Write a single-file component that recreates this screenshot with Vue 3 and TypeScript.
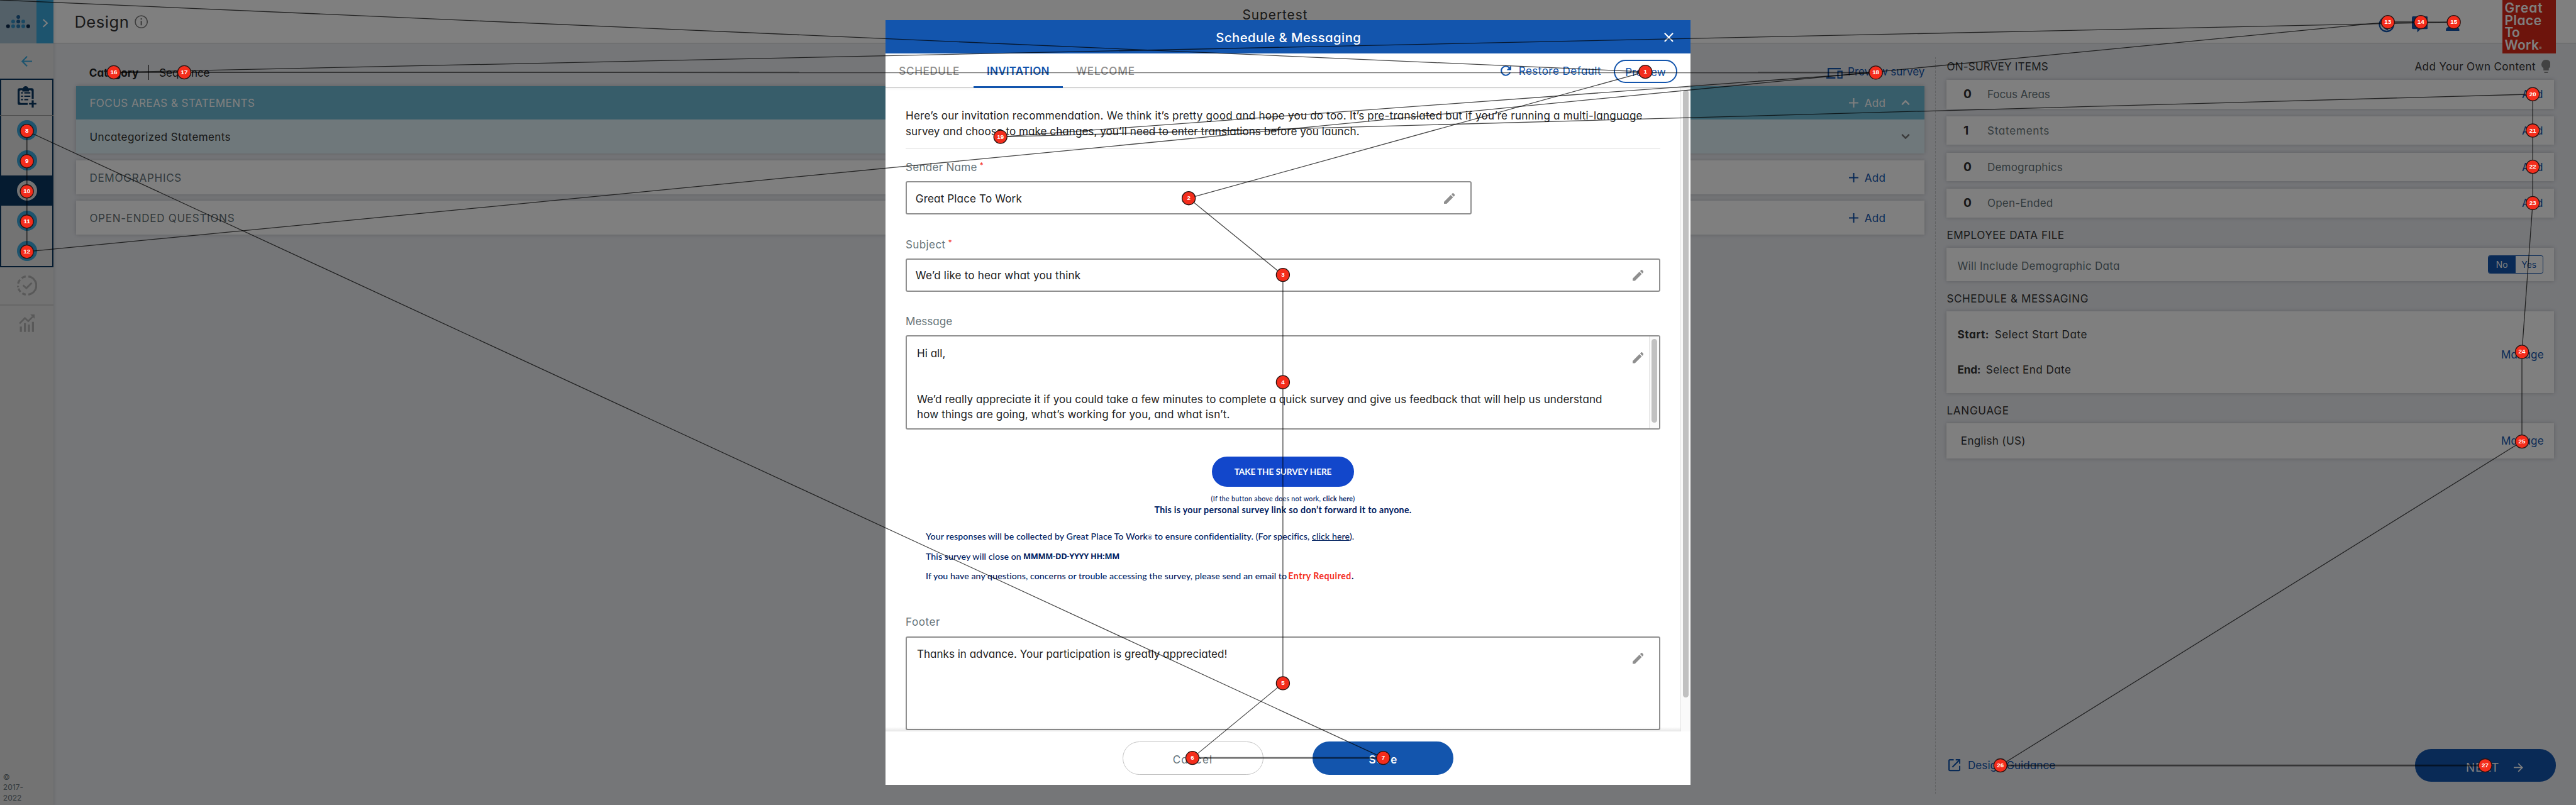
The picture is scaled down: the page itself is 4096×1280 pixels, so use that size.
<script setup lang="ts">
interface Stop { n: number; x: number; y: number }
interface Segment { x1: number; y1: number; x2: number; y2: number; w: number; o: number }

// Spreads the letters of a label over a given measure (in tenths of a rem).
const vFit = {
  mounted(el: HTMLElement, binding: { value: number }) {
    const unit = parseFloat(getComputedStyle(document.documentElement).fontSize) / 10
    const count = (el.textContent ?? '').trim().length
    const natural = el.getBoundingClientRect().width
    el.style.letterSpacing = `${((binding.value + 1.5) * unit - natural) / count}px`
  },
}

const sections = [
  { label: 'DEMOGRAPHICS', w: 136 },
  { label: 'OPEN-ENDED QUESTIONS', w: 215 },
]

const items = [
  { count: 0, label: 'Focus Areas', w: 92 },
  { count: 1, label: 'Statements', w: 91.5 },
  { count: 0, label: 'Demographics', w: 111 },
  { count: 0, label: 'Open-Ended', w: 96.5 },
]

const logoDots: [number, number, string][] = [
  [27.3, 25.4, '#1f5f95'],
  [19.6, 32.1, '#3590c4'], [27.3, 32.1, '#1f5f95'], [34.7, 32.1, '#3590c4'],
  [12, 39.2, '#0b2b4f'], [19.6, 39.2, '#3590c4'], [27.3, 39.2, '#2a78ae'], [34.7, 39.2, '#3590c4'], [42.1, 39.2, '#0b2b4f'],
]

const steps = [8, 9, 10, 11, 12]

const stops: Stop[] = [
  { n: 1, x: 2452.7, y: 107 }, { n: 2, x: 1772, y: 295.5 }, { n: 3, x: 1912.4, y: 409.8 },
  { n: 4, x: 1912.4, y: 569.7 }, { n: 5, x: 1912.4, y: 1018.5 }, { n: 6, x: 1777.5, y: 1129.8 },
  { n: 7, x: 2062, y: 1129.8 }, { n: 8, x: 40, y: 195.2 }, { n: 9, x: 40, y: 240.3 },
  { n: 10, x: 40, y: 285.3 }, { n: 11, x: 40, y: 330.3 }, { n: 12, x: 40, y: 375.2 },
  { n: 13, x: 3559.5, y: 33 }, { n: 14, x: 3608.7, y: 33 }, { n: 15, x: 3657.8, y: 33 },
  { n: 16, x: 169.6, y: 107.8 }, { n: 17, x: 274.7, y: 107.8 }, { n: 18, x: 2796.2, y: 108.2 },
  { n: 19, x: 1491.3, y: 204 }, { n: 20, x: 3775.5, y: 140.4 }, { n: 21, x: 3775.5, y: 194.6 },
  { n: 22, x: 3775.5, y: 248.7 }, { n: 23, x: 3775.5, y: 302.7 }, { n: 24, x: 3759.4, y: 524.5 },
  { n: 25, x: 3759.4, y: 658.2 }, { n: 26, x: 2982, y: 1141 }, { n: 27, x: 3704.6, y: 1141 },
]

const segments: Segment[] = stops.map((s, i) => {
  const from = i === 0 ? { x: 0, y: 0 } : stops[i - 1]
  const broad = [7, 14, 27].includes(s.n)
  const middle = [9, 10, 11, 12, 17, 18].includes(s.n)
  return { x1: from.x, y1: from.y, x2: s.x, y2: s.y, w: broad ? 2.6 : middle ? 1.9 : 1.2, o: broad || middle ? 0.55 : 0.72 }
})
</script>

<template>
  <div class="app">
    <aside class="side">
      <div class="brand">
        <svg class="dots" viewBox="0 0 54 65"><circle v-for="(d, i) in logoDots" :key="i" :cx="d[0]" :cy="d[1]" r="2.8" :fill="d[2]" /></svg>
        <div class="expand"><svg viewBox="0 0 26 65"><path d="M10 29l6 5.5-6 5.5" fill="none" stroke="#fff" stroke-width="1.9" /></svg></div>
      </div>
      <div class="back"><svg viewBox="0 0 16 16"><path d="M16 8H1.5M8.5 .8L1.3 8l7.2 7.2" fill="none" stroke="#3aa8dc" stroke-width="2" /></svg></div>
      <div class="steps">
        <div class="stephead">
          <svg viewBox="0 0 28 32"><path fill="#0b3760" fill-rule="evenodd" d="M3 3h5c1-4 7-4 8 0h5q3 0 3 3v13h-3V8q0-2-2-2h-2v2H7V6H5Q3 6 3 8v15q0 2 2 2h10v3H3q-3 0-3-3V6q0-3 3-3z" /><path fill="#0b3760" d="M5 9h3v2H5zm5 0h9v2h-9zM5 14h3v2H5zm5 0h9v2h-9zM5 19h3v2H5zm5 0h6v2h-6zM21 21h3v4h4v2.500h-4v4.500h-3v-4.500h-4V25h4z" /></svg>
        </div>
        <div v-for="s in steps" :key="s" class="step" :class="{ current: s === 10 }"><span class="ring"></span></div>
      </div>
      <div class="later first">
        <svg viewBox="0 0 30 30"><g fill="none" stroke="#b2b2b2" stroke-width="3"><path d="M17 1.600a13.500 13.500 0 0 1 0 26.800" /><path d="M13 1.600A13.500 13.500 0 0 0 1.600 17.500" stroke-dasharray="6.500 3.300" /><path d="M1.900 18.500A13.500 13.500 0 0 0 13 28.400" stroke-dasharray="6 3.300" stroke-dashoffset="-1" /><path d="M9 14.500l5 4.500 8-8" stroke-width="2.600" /></g></svg>
      </div>
      <div class="later second">
        <svg viewBox="0 0 24 26"><path d="M1 13.500l8-8 5 4.500 6.500-6.500" fill="none" stroke="#b2b2b2" stroke-width="2.400" /><path d="M17 0h7v7zM1.500 18h3v8h-3zm6-5h3v13h-3zm6 2h3v11h-3zm6-4h3v15h-3z" fill="#b2b2b2" /></svg>
      </div>
      <div class="copy">©<br />2017-<br />2022</div>
    </aside>

    <div class="main">
      <header class="top">
        <div class="title">
          <span v-fit="80">Design</span>
          <svg viewBox="0 0 20 20"><circle cx="10" cy="10" r="9" fill="none" stroke="#7c7c7c" stroke-width="1.500" /><path d="M9 4.800h2v2H9zM9 8.600h2v6.600H9z" fill="#7c7c7c" /></svg>
        </div>
        <div class="project"><span v-fit="96">Supertest</span></div>
        <div class="tools">
          <svg viewBox="0 0 24 24"><circle cx="12" cy="12" r="10.500" fill="none" stroke="#1355ad" stroke-width="2.200" /><path d="M9 17l5 3" stroke="#1355ad" stroke-width="2.500" /></svg>
          <svg viewBox="0 0 24 24"><path d="M2 0h20q2 0 2 2v15q0 2-2 2H13l-5 5V19H2q-2 0-2-2V2Q0 0 2 0z" fill="#1355ad" /></svg>
          <svg viewBox="0 0 24 24"><circle cx="12" cy="8" r="5.500" fill="#1355ad" /><path d="M2 21.500v-2c0-3 5-5 10-5s10 2 10 5v2z" fill="#1355ad" /></svg>
        </div>
        <div class="gptw">
          <span v-fit="56">Great</span><span v-fit="54">Place</span><span v-fit="21">To</span><span class="wk"><span v-fit="50">Work</span><i>®</i></span>
        </div>
      </header>

      <div class="content">
        <section class="left">
          <div class="bar">
            <b class="cat"><span v-fit="72">Category</span></b>
            <span class="seq"><span v-fit="73.5">Sequence</span></span>
            <a class="survey">
              <svg viewBox="0 0 24 16"><path d="M3 13.500V1h18.500M0 15h13.500" fill="none" stroke="#1355ad" stroke-width="2.200" /><rect x="17.300" y="5" width="6" height="10" fill="none" stroke="#1355ad" stroke-width="1.800" /></svg>
              <span v-fit="113">Preview survey</span>
            </a>
          </div>
          <div class="card open">
            <div class="row teal">
              <span v-fit="245">FOCUS AREAS &amp; STATEMENTS</span>
              <a class="add"><svg viewBox="0 0 14 14"><path d="M7 0v14M0 7h14" stroke="currentColor" stroke-width="2" /></svg><span v-fit="30">Add</span></a>
              <svg class="chev" viewBox="0 0 12 7"><path d="M1 6.300l5-5 5 5" fill="none" stroke="#fff" stroke-width="2.200" /></svg>
            </div>
            <div class="row pale">
              <span v-fit="209">Uncategorized Statements</span>
              <svg class="chev" viewBox="0 0 12 7"><path d="M1 .7l5 5 5-5" fill="none" stroke="#777" stroke-width="2.200" /></svg>
            </div>
          </div>
          <div v-for="s in sections" :key="s.label" class="card row plain">
            <span v-fit="s.w">{{ s.label }}</span>
            <a class="add"><svg viewBox="0 0 14 14"><path d="M7 0v14M0 7h14" stroke="currentColor" stroke-width="2" /></svg><span v-fit="30">Add</span></a>
          </div>
        </section>

        <div class="dash"></div>

        <section class="right">
          <div class="head firsthead">
            <span v-fit="150">ON-SURVEY ITEMS</span>
            <div class="own"><span v-fit="179">Add Your Own Content</span><svg viewBox="0 0 14 20"><path d="M7 0a7 7 0 0 1 4 12.700V16H3v-3.300A7 7 0 0 1 7 0zM4 18h6q0 2-1.500 2h-3Q4 20 4 18z" fill="#858585" /></svg></div>
          </div>
          <div v-for="it in items" :key="it.label" class="card item">
            <b>{{ it.count }}</b><span v-fit="it.w">{{ it.label }}</span><a><span v-fit="30">Add</span></a>
          </div>
          <div class="head"><span v-fit="174">EMPLOYEE DATA FILE</span></div>
          <div class="card demo">
            <span class="grey"><span v-fit="240.6">Will Include Demographic Data</span></span>
            <div class="toggle"><span class="on">No</span><span>Yes</span></div>
          </div>
          <div class="head"><span v-fit="210">SCHEDULE &amp; MESSAGING</span></div>
          <div class="card sched">
            <div class="dates">
              <div><b v-fit="46">Start:</b><span v-fit="136.6">Select Start Date</span></div>
              <div><b v-fit="33">End:</b><span v-fit="125.5">Select End Date</span></div>
            </div>
            <a><span v-fit="62">Manage</span></a>
          </div>
          <div class="head"><span v-fit="91.7">LANGUAGE</span></div>
          <div class="card lang"><span v-fit="95">English (US)</span><a><span v-fit="62">Manage</span></a></div>
          <div class="bottom">
            <a class="guide"><svg viewBox="0 0 18 18"><path d="M8 1H2.500Q1 1 1 2.500v13Q1 17 2.500 17h13q1.500 0 1.500-1.500V10M11 1h6v6M17 1L6 12" fill="none" stroke="#1355ad" stroke-width="2" /></svg><span v-fit="129">Design Guidance</span></a>
            <button class="next"><span v-fit="48.6">NEXT</span><svg viewBox="0 0 14 14"><path d="M0 7h12.500M6.800 1l6 6-6 6" fill="none" stroke="#fff" stroke-width="1.600" /></svg></button>
          </div>
        </section>
      </div>
    </div>

    <div class="shade">
      <div class="modal">
        <div class="mhead">
          <span v-fit="215">Schedule &amp; Messaging</span>
          <svg viewBox="0 0 14 14"><path d="M.8 .8l12.400 12.400M13.200 .8L.8 13.200" stroke="#fff" stroke-width="2" /></svg>
        </div>
        <nav class="tabs">
          <span class="tab t1"><span v-fit="89">SCHEDULE</span></span>
          <span class="tab active"><span v-fit="92">INVITATION</span></span>
          <span class="tab t3"><span v-fit="86.5">WELCOME</span></span>
          <a class="restore"><svg viewBox="0 0 16 16"><path d="M14.200 10.500A6.800 6.800 0 1 1 12.800 3.200" fill="none" stroke="#1355ad" stroke-width="2" /><path d="M16 0v7H9z" fill="#1355ad" /></svg><span v-fit="121.6">Restore Default</span></a>
          <button class="preview"><span v-fit="59">Preview</span></button>
        </nav>
        <div class="mbody">
          <div class="form">
            <p class="intro">
              <span v-fit="1097">Here’s our invitation recommendation. We think it’s pretty good and hope you do too. It’s pre-translated but if you’re running a multi-language</span><br />
              <span v-fit="675">survey and choose to make changes, you’ll need to enter translations before you launch.</span>
            </p>
            <label><span v-fit="105">Sender Name</span><i>*</i></label>
            <div class="field short"><span v-fit="157">Great Place To Work</span><svg class="pen" viewBox="3 3 18 18"><path d="M3 17.250V21h3.750L17.810 9.940l-3.750-3.750zM20.710 7.040a1 1 0 0 0 0-1.410l-2.340-2.340a1 1 0 0 0-1.410 0l-1.830 1.830 3.750 3.750z" /></svg></div>
            <label class="gap"><span v-fit="58">Subject</span><i>*</i></label>
            <div class="field"><span v-fit="244.5">We’d like to hear what you think</span><svg class="pen" viewBox="3 3 18 18"><path d="M3 17.250V21h3.750L17.810 9.940l-3.750-3.750zM20.710 7.040a1 1 0 0 0 0-1.410l-2.340-2.340a1 1 0 0 0-1.410 0l-1.830 1.830 3.750 3.750z" /></svg></div>
            <label class="gap"><span v-fit="68">Message</span></label>
            <div class="area">
              <div class="text"><span v-fit="41">Hi all,</span><br /><br /><br /><span v-fit="1020">We’d really appreciate it if you could take a few minutes to complete a quick survey and give us feedback that will help us understand</span><br /><span v-fit="465">how things are going, what’s working for you, and what isn’t.</span></div>
              <svg class="pen" viewBox="3 3 18 18"><path d="M3 17.250V21h3.750L17.810 9.940l-3.750-3.750zM20.710 7.040a1 1 0 0 0 0-1.410l-2.340-2.340a1 1 0 0 0-1.410 0l-1.830 1.830 3.750 3.750z" /></svg>
              <div class="track"><div class="thumb"></div></div>
            </div>
            <div class="mail">
              <div class="take"><span v-fit="143.5">TAKE THE SURVEY HERE</span></div>
              <div class="hint"><span v-fit="212.6">(If the button above does not work, <b>click here</b>)</span></div>
              <div class="own-link"><span v-fit="382">This is your personal survey link so don’t forward it to anyone.</span></div>
              <p><span v-fit="637">Your responses will be collected by Great Place To Work<small>®</small> to ensure confidentiality. (For specifics, <u>click here</u>).</span></p>
              <p class="pair"><span v-fit="140.800">This survey will close on</span><b class="when" v-fit="142">MMMM-DD-YYYY HH:MM</b></p>
              <p class="pair"><span v-fit="537">If you have any questions, concerns or trouble accessing the survey, please send an email to</span><span v-fit="96.500"><b class="req">Entry Required</b><b>.</b></span></p>
            </div>
            <label class="foot"><span v-fit="50">Footer</span></label>
            <div class="area last">
              <div class="text"><span v-fit="461">Thanks in advance. Your participation is greatly appreciated!</span></div>
              <svg class="pen" viewBox="3 3 18 18"><path d="M3 17.250V21h3.750L17.810 9.940l-3.750-3.750zM20.710 7.040a1 1 0 0 0 0-1.410l-2.340-2.340a1 1 0 0 0-1.410 0l-1.830 1.830 3.750 3.750z" /></svg>
            </div>
          </div>
          <div class="track outer"><div class="thumb"></div></div>
        </div>
        <div class="mfoot">
          <button class="cancel"><span v-fit="58">Cancel</span></button>
          <button class="save"><span v-fit="41.5">Save</span></button>
        </div>
      </div>
    </div>

    <svg class="path" viewBox="0 0 3840 1200">
      <line v-for="(s, i) in segments" :key="i" :x1="s.x1" :y1="s.y1" :x2="s.x2" :y2="s.y2" stroke="#000" :stroke-width="s.w" :stroke-opacity="s.o" />
      <g v-for="s in stops" :key="s.n">
        <circle :cx="s.x" :cy="s.y" r="9.900" fill="#f42d1c" stroke="#2a1311" stroke-width="1.200" />
        <text :x="s.x" :y="s.y + 2.800" text-anchor="middle">{{ s.n }}</text>
      </g>
    </svg>
  </div>
</template>

<style>
html { font-size: calc(100vw / 384); }
body { margin: 0; overflow: hidden; }
</style>

<style scoped>
* { box-sizing: border-box; }
.app { position: relative; display: flex; width: 384rem; height: 120rem; overflow: hidden; background: #eaecf1; color: #333; font: 1.6rem/2rem Inter, "Noto Sans", sans-serif; font-feature-settings: "cv11", "calt" 0; white-space: nowrap; }
span, a, b { flex: none; }
svg { flex: none; display: block; }
a { color: #1355ad; }
button { font: inherit; padding: 0; border: 0; display: flex; align-items: center; justify-content: center; }
p { margin: 0; }

.side { width: 8rem; height: 120rem; background: #e6e6e6; display: flex; flex-direction: column; box-shadow: 0 0 .5rem rgba(0,0,0,.18); z-index: 1; }
.brand { display: flex; height: 6.5rem; background: #a6c0d0; }
.dots { width: 5.4rem; height: 6.5rem; }
.expand { width: 2.6rem; background: #3aa9dd; }
.expand svg { width: 2.6rem; height: 6.5rem; }
.back { height: 5.2rem; display: flex; align-items: center; justify-content: center; }
.back svg { width: 1.6rem; height: 1.6rem; }
.steps { height: 28.1rem; border: .2rem solid #0b3760; display: flex; flex-direction: column; }
.stephead { height: 5.35rem; margin: 0 -.2rem; border-bottom: .1rem solid #999; display: flex; justify-content: center; align-items: center; padding-bottom: .2rem; }
.stephead svg { width: 2.8rem; height: 3.2rem; }
.step { height: 4.5rem; display: flex; align-items: center; justify-content: center; margin: 0 -.2rem; }
.current { background: #0b3760; }
.ring { width: 3rem; height: 3rem; border-radius: 50%; background: #3aa8dc; }
.current .ring { background: #e6e6e6; }
.later { display: flex; justify-content: center; align-items: center; }
.first { height: 5.8rem; border-bottom: .2rem solid #cfcfcf; }
.first svg { width: 3rem; height: 3rem; }
.second { height: 5.2rem; }
.second svg { width: 2.4rem; height: 2.6rem; }
.copy { margin-top: auto; padding: 0 0 .25rem .45rem; color: #66757b; font-size: 1.13rem; line-height: 1.55rem; }

.main { width: 376rem; }
.top { display: flex; height: 6.5rem; background: #fff; border-bottom: .1rem solid #c9c9c9; padding-left: 3rem; align-items: center; }
.title { width: 174.2rem; display: flex; align-items: center; gap: .8rem; font-size: 2.4rem; padding-left: .1rem; padding-top: .1rem; }
.title svg { width: 2rem; height: 2rem; }
.project { font-size: 1.95rem; margin-bottom: 2rem; }
.tools { display: flex; gap: 2.52rem; margin: .9rem 6.18rem 0 auto; }
.tools svg { width: 2.4rem; height: 2.4rem; }
.gptw { width: 8rem; height: 8rem; margin-right: 3rem; align-self: flex-start; background: #da2819; color: #fff; display: flex; flex-direction: column; align-items: flex-start; font-weight: 600; font-size: 1.96rem; line-height: 1.86rem; padding: .25rem 0 0 .35rem; z-index: 1; }
.wk { display: flex; }
.wk i { font: 400 .6rem/1rem Inter, sans-serif; margin-top: .9rem; }

.content { display: flex; height: 113.5rem; }
.left { width: 275.6rem; margin-left: 3.3rem; }
.bar { height: 6.3rem; padding: 2.3rem 0 0 2rem; display: flex; align-items: center; color: #222; }
.cat { font-weight: 700; width: 8.9rem; height: 2.3rem; padding-top: .15rem; border-right: .1rem solid #222; }
.seq { margin-left: 1.55rem; }
.survey { display: flex; align-items: center; gap: .8rem; margin: 0 0 .2rem auto; }
.survey svg { width: 2.4rem; height: 1.6rem; margin-top: .5rem; }
.card { background: #fff; box-shadow: 0 0 .6rem rgba(0,0,0,.2); }
.row { display: flex; align-items: center; height: 5.05rem; padding-left: 2.05rem; position: relative; }
.teal { background: #6ebad4; color: #fff; }
.teal a { color: #fff; }
.pale { background: #def0f6; color: #333; }
.plain { margin-top: 1rem; padding-top: .1rem; color: #66757b; }
.add { display: flex; align-items: center; gap: .9rem; margin: 0 5.8rem 0 auto; }
.add svg { width: 1.4rem; height: 1.4rem; }
.chev { width: 1.3rem; height: .76rem; margin: 0 2.15rem 0 auto; }
.teal .add { margin-right: 2.35rem; }
.teal .chev { margin-left: 0; }
.dash { width: .1rem; margin: 2rem 1.6rem 1.5rem 1.6rem; background: repeating-linear-gradient(#c4c6c9 0 .3rem, transparent .3rem .5rem); }
.right { width: 90.5rem; display: flex; flex-direction: column; }
.head { height: 4.5rem; padding-top: .75rem; display: flex; align-items: center; justify-content: space-between; }
.firsthead { height: 5.44rem; padding-top: 1.4rem; }
.own { display: flex; align-items: center; gap: .8rem; padding-right: .5rem; }
.own svg { width: 1.4rem; height: 2rem; }
.item { display: flex; align-items: center; height: 4.24rem; margin-bottom: 1.17rem; color: #66757b; padding-right: 1.6rem; }
.item:nth-child(5) { margin-bottom: 0; }
.item b { width: 6.05rem; padding-left: 2.5rem; color: #333; font-size: 1.8rem; }
.item a, .sched a, .lang a { margin-left: auto; }
.demo { height: 5rem; display: flex; align-items: center; justify-content: space-between; padding: 0 1.6rem; }
.grey { color: #66757b; padding-top: .4rem; }
.toggle { display: flex; width: 8.25rem; height: 2.77rem; border: .15rem solid #1355ad; border-radius: .3rem; color: #1355ad; font-size: 1.3rem; overflow: hidden; }
.toggle span { flex: 1; text-align: center; line-height: 2.7rem; }
.toggle .on { background: #1355ad; color: #fff; }
.sched { height: 12.15rem; display: flex; align-items: center; padding: 0 1.5rem 0 1.6rem; }
.dates { display: flex; flex-direction: column; gap: 3.24rem; }
.dates b { display: inline-block; margin-right: .8rem; }
.sched a { padding-top: .75rem; }
.lang { height: 5.3rem; display: flex; align-items: center; padding: 0 1.5rem 0 2.1rem; }
.bottom { margin-top: auto; margin-bottom: 3.5rem; margin-right: -.3rem; display: flex; align-items: center; justify-content: space-between; }
.guide { display: flex; align-items: center; gap: 1.15rem; padding-left: .2rem; }
.guide svg { width: 1.8rem; height: 1.8rem; }
.next { width: 21rem; height: 4.8rem; border-radius: 2.4rem; background: #1355ad; color: #fff; font-size: 1.76rem; gap: 2.1rem; padding: .7rem 0 0 2.7rem; }
.next svg { width: 1.4rem; height: 1.4rem; }

.shade { position: absolute; inset: 0; background: rgba(0,0,0,.5); display: flex; align-items: center; justify-content: center; z-index: 2; }
.modal { width: 120rem; height: 114rem; background: #fff; display: flex; flex-direction: column; color: #222; }
.mhead { height: 5rem; background: #1355ad; color: #fff; display: flex; align-items: center; justify-content: flex-end; font-size: 1.9rem; font-weight: 500; padding: .1rem 2.5rem 0 0; }
.mhead span { margin-right: 45.2rem; }
.mhead svg { width: 1.4rem; height: 1.4rem; }
.tabs { height: 5.1rem; display: flex; border-bottom: .1rem solid #bdbdbd; box-shadow: 0 .2rem .4rem rgba(0,0,0,.04); flex: none; z-index: 1; align-items: flex-start; }
.tab { height: 5.1rem; padding: 1.55rem 2rem 0; font-weight: 500; color: #8e8e8e; }
.t1 { width: 13.1rem; }
.tab.active { width: 13.3rem; color: #1355ad; font-weight: 600; border-bottom: .3rem solid #1355ad; }
.restore { display: flex; align-items: center; gap: 1.15rem; margin: 1.55rem 1.9rem 0 auto; }
.restore svg { width: 1.6rem; height: 1.6rem; }
.preview { width: 9.4rem; height: 3.45rem; margin: .95rem 2rem 0 0; border: .2rem solid #1355ad; border-radius: 1.75rem; background: #fff; color: #1355ad; padding-top: .15rem; }
.mbody { height: 95.9rem; display: flex; flex: none; position: relative; overflow: hidden; }
.mbody::after { content: ""; position: absolute; left: 0; right: 1.5rem; bottom: 0; height: .6rem; background: linear-gradient(transparent, rgba(0,0,0,.1)); }
.form { width: 118.5rem; padding: 3.07rem 3rem 0; }
.intro { line-height: 2.3rem; height: 6.05rem; border-bottom: .1rem solid #e4e4e4; }
label { display: flex; height: 2rem; margin: 1.7rem 0 1.1rem; color: #66757b; }
label i { color: #f42d1c; font: 1.1rem/1.6rem Inter, sans-serif; margin-left: .4rem; }
label.gap { margin: 3.4rem 0 1.1rem; }
.field { height: 5rem; border: .2rem solid #8f8f8f; border-radius: .3rem; display: flex; align-items: center; justify-content: space-between; padding: .1rem 2.3rem 0 1.3rem; }
.short { width: 84.35rem; }
.pen { width: 1.65rem; height: 1.65rem; fill: #8f8f8f; }
.area { height: 14rem; border: .2rem solid #8f8f8f; border-radius: .3rem; display: flex; }
.text { flex: 1; padding: 1.35rem 0 0 1.5rem; line-height: 2.28rem; }
.area .pen { margin: 2.3rem .8rem 0 0; }
.area.last .pen { margin-right: 2.3rem; }
.track { width: 1.5rem; background: #fafafa; border-left: .1rem solid #e2e2e2; padding: .35rem 0 0 .3rem; }
.thumb { width: .8rem; height: 12.5rem; border-radius: .4rem; background: #c1c1c1; }
.outer .thumb { height: 90.5rem; }
.mail { font-family: Lato, "Open Sans", sans-serif; font-size: 1.33rem; color: #00205f; font-weight: 500; padding: 4.05rem 3rem 0; height: 26.25rem; line-height: 1.8rem; }
.mail b { font-weight: 700; }
.take { width: 21.1rem; height: 4.5rem; margin: 0 auto; border-radius: 2.25rem; background: #1247cb; color: #fff; font-weight: 700; font-size: 1.28rem; display: flex; align-items: center; justify-content: center; padding-top: .15rem; }
.hint { font-size: 1rem; text-align: center; margin-top: .86rem; }
.own-link { font-weight: 700; text-align: center; margin: -.12rem 0 2.16rem; }
.mail p { margin-bottom: 1.15rem; height: 1.8rem; }
.pair { display: flex; gap: .2rem; }
.mail .when { font-family: "Open Sans", sans-serif; font-size: 1.2rem; margin-left: .1rem; }
.mail small { font-size: .8rem; line-height: 0; }
.mail .req { color: #f42d1c; }
label.foot { margin: 1.45rem 0 1.15rem; }
.mfoot { height: 8rem; display: flex; align-items: center; justify-content: center; gap: 7.4rem; padding-left: 0; }
.mfoot button { width: 21rem; height: 5rem; border-radius: 2.5rem; padding-top: .35rem; }
.cancel { border: .1rem solid #c4c4c4; background: #fff; color: #66757b; }
.save { background: #1355ad; color: #fff; font-weight: 600; }

.path { position: absolute; left: 0; top: 0; width: 384rem; height: 120rem; z-index: 3; }
.path text { font: 600 9.2px "Liberation Sans", Arial, sans-serif; fill: #fff; }
</style>
